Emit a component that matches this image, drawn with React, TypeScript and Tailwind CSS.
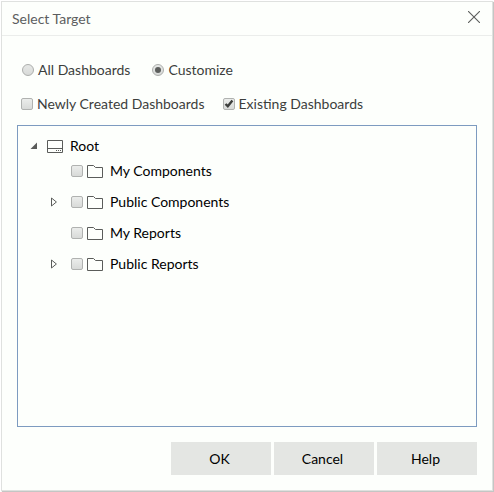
import { useState } from "react";

const folders = [
  { name: "My Components", expandable: false },
  { name: "Public Components", expandable: true },
  { name: "My Reports", expandable: false },
  { name: "Public Reports", expandable: true },
];

function Checkbox({ id, defaultChecked = false }: { id: string; defaultChecked?: boolean }) {
  return (
    <span className="grid shrink-0">
      <input
        id={id}
        type="checkbox"
        defaultChecked={defaultChecked}
        className="peer col-start-1 row-start-1 w-3 h-3 appearance-none rounded-xs border border-[#b0b2b0] bg-linear-to-b from-[#ebedeb] to-[#d8dad8]"
      />
      <svg
        viewBox="0 0 12 12"
        className="col-start-1 row-start-1 w-3 h-3 invisible peer-checked:visible pointer-events-none"
      >
        <path d="M2.5 6 4.8 8.2 9.4 2.6" fill="none" stroke="#3c3e3c" strokeWidth="2.4" />
      </svg>
    </span>
  );
}

function Radio({ id, checked, onChange }: { id: string; checked: boolean; onChange: () => void }) {
  return (
    <span className="grid shrink-0 place-items-center">
      <input
        id={id}
        type="radio"
        name="target"
        checked={checked}
        onChange={onChange}
        className="peer col-start-1 row-start-1 w-3 h-3 appearance-none rounded-full border border-[#acaeac] bg-linear-to-b from-[#e6e8e6] to-[#d8dad8]"
      />
      <span className="col-start-1 row-start-1 w-1.5 h-1.5 rounded-full bg-[#5c5e5c] invisible peer-checked:visible pointer-events-none" />
    </span>
  );
}

function FolderIcon() {
  return (
    <svg viewBox="0 0 16 16" className="w-4 h-4 shrink-0" fill="none" stroke="#5a5c5a">
      <path d="M.5 14.5V2.5H6.5L8.5 4.5H15.5V14.5Z" />
    </svg>
  );
}

export default function App() {
  const [target, setTarget] = useState("customize");

  return (
    <div className="min-h-screen bg-white p-px flex font-[Lato,sans-serif] text-sm text-[#3c3e3c]">
      <div className="flex-1 flex flex-col bg-[#fdfffc] border border-[#dfe1df] shadow-[1px_1px_1px_#c4c6c4]">
        {/* Header */}
        <div className="h-[34px] flex items-center justify-between pl-[10px] pr-3 border-b border-[#ebedeb]">
          <h1 className="text-[#5c5e60]">Select Target</h1>
          <button aria-label="Close" className="pb-1">
            <svg viewBox="0 0 12 12" className="w-3 h-3" fill="none" stroke="#5c5e5c" strokeWidth="1.1">
              <path d="M0 0 12 12M12 0 0 12" />
            </svg>
          </button>
        </div>

        <div className="flex-1 flex flex-col px-[15px] pt-[22px] pb-[15px]">
          {/* Target options */}
          <div className="h-6 flex items-center pl-[5px]">
            <Radio id="all" checked={target === "all"} onChange={() => setTarget("all")} />
            <label htmlFor="all" className="pl-1">
              All Dashboards
            </label>
            <span className="w-[22px]" />
            <Radio
              id="customize"
              checked={target === "customize"}
              onChange={() => setTarget("customize")}
            />
            <label htmlFor="customize" className="pl-1">
              Customize
            </label>
          </div>
          <div className="h-6 mt-[10px] flex items-center pl-1">
            <Checkbox id="newly-created" />
            <label htmlFor="newly-created" className="pl-1">
              Newly Created Dashboards
            </label>
            <span className="w-[18px]" />
            <Checkbox id="existing" defaultChecked />
            <label htmlFor="existing" className="pl-1">
              Existing Dashboards
            </label>
          </div>

          {/* Dashboard tree */}
          <div className="flex-1 mt-[9px] pt-[11px] pl-3 border border-[#7d9bc0] text-black">
            <div className="h-[18px] flex items-center">
              <button aria-label="Collapse Root" className="w-[17px]">
                <svg viewBox="0 0 8 8" className="w-2 h-2" fill="#5a5c5a">
                  <path d="M7 .5V7H.5Z" />
                </svg>
              </button>
              <svg viewBox="0 0 16 13" className="w-4 h-[13px]" fill="none" stroke="#5a5c5a">
                <path d="M.5 .5H15.5V12.5H.5ZM.5 8.5H15.5" />
                <path d="M9 10.5H10M11 10.5H12M13 10.5H14" />
              </svg>
              <span className="pl-[7px]">Root</span>
            </div>
            <ul>
              {folders.map((folder) => (
                <li key={folder.name} className="h-[31px] flex items-center pl-[21px]">
                  <span className="w-5 flex">
                    {folder.expandable && (
                      <button aria-label={`Expand ${folder.name}`}>
                        <svg viewBox="0 0 6 11" className="w-1.5 h-[11px]" fill="none" stroke="#5a5c5a">
                          <path d="M.5 2V10L5.4 6Z" />
                        </svg>
                      </button>
                    )}
                  </span>
                  <Checkbox id={folder.name} />
                  <label htmlFor={folder.name} className="flex items-center pl-1 gap-[7px]">
                    <FolderIcon />
                    {folder.name}
                  </label>
                </li>
              ))}
            </ul>
          </div>

          {/* Actions */}
          <div className="mt-[15px] flex justify-end gap-[3px] text-black">
            <button className="w-[100px] h-[33px] pr-[3px] bg-[#e4e6e3]">OK</button>
            <button className="w-[100px] h-[33px] pr-[3px] bg-[#e4e6e3]">Cancel</button>
            <button className="w-[100px] h-[33px] pr-[3px] bg-[#e4e6e3]">Help</button>
          </div>
        </div>
      </div>
    </div>
  );
}
